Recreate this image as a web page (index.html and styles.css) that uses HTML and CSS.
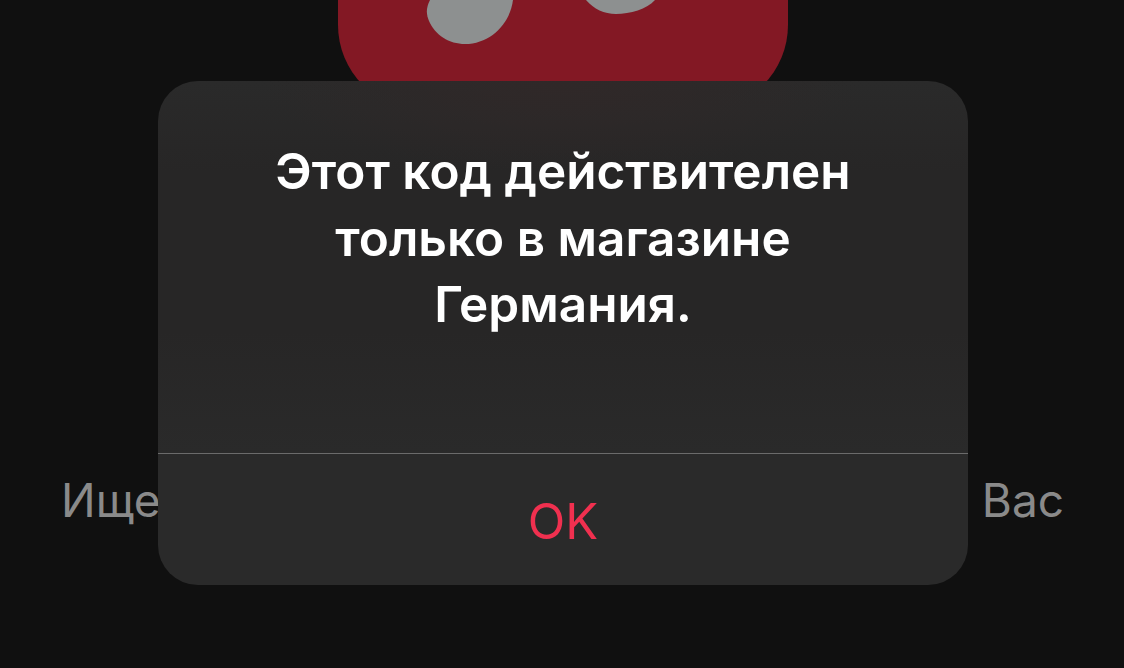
FILE: index.html
```html
<!DOCTYPE html>
<html lang="ru">
<head>
    <meta charset="UTF-8">
    <meta name="viewport" content="width=device-width, initial-scale=1.0">
    <title>Код</title>
    <link rel="stylesheet" href="styles.css">
</head>
<body>

    <div class="screen">
        <!-- Icon above the tab labels -->
        <svg class="art" viewBox="0 0 450 110" width="450" height="110" aria-hidden="true">
            <path class="art-spot" d="M92 0 C88 8 88 14 91 21 C97 35 111 44 127 44 C152 44 172 24 175 0 Z"/>
            <path class="art-spot" d="M248 0 C256 9 266 14 278 14 C292 14 309 9 317 0 Z"/>
        </svg>

        <div class="tabs">
            <span class="tab">Ище</span>
            <span class="tab">Вас</span>
        </div>

        <!-- Alert -->
        <div class="alert">
            <div class="alert-body">
                <h1 class="alert-title">Этот код действителен<br>только в магазине<br>Германия.</h1>
            </div>
            <button class="alert-button" type="button">OK</button>
        </div>
    </div>

</body>
</html>
```

FILE: styles.css
```css
body {
    margin: 0;
    padding: 0;
    background: #101010;
    font-family: Inter, "Liberation Sans", sans-serif;
}

.screen {
    position: relative;
    width: 1124px;
    height: 668px;
    overflow: hidden;
}

.art {
    display: block;
    margin: 0 auto;
    position: relative;
    left: 1px;
    background: #831824;
    border-radius: 0 0 85px 85px;
}

.art-spot {
    fill: #8d9090;
}

.tabs {
    display: flex;
    justify-content: space-between;
    margin-top: 362px;
    padding: 0 60px 0 61px;
}

.tab {
    font-size: 46px;
    line-height: 56px;
    color: #8a8a8a;
}

/* Sits on top of the icon and the tab labels */
.alert {
    position: absolute;
    top: 81px;
    left: 158px;
    width: 810px;
    height: 504px;
    display: flex;
    flex-direction: column;
    background:
        radial-gradient(ellipse 300px 90px at 50% 0, #302828, rgba(48, 40, 40, 0)),
        linear-gradient(#2a2a2a, #272626 90px, #272626 250px, #2a2a2a 372px);
    border-radius: 40px;
}

.alert-body {
    height: 373px;
    border-bottom: 1px solid #6b6b6b;
    padding-top: 57px;
    box-sizing: border-box;
}

.alert-title {
    margin: 0;
    text-align: center;
    font-size: 49.5px;
    font-weight: 600;
    line-height: 66.5px;
    color: #fff;
}

.alert-button {
    flex-grow: 1;
    background: none;
    border: none;
    padding: 3px 0 0;
    font-family: inherit;
    font-size: 49px;
    color: #f0304f;
}
```
